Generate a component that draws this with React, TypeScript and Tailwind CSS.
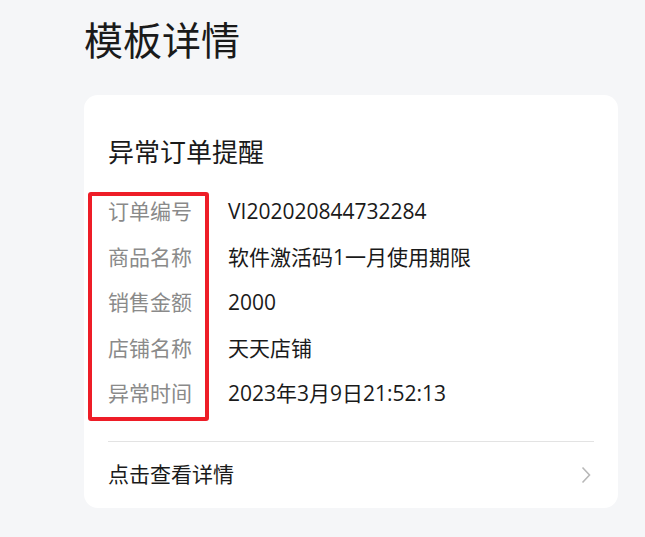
const rows = [
  { label: "订单编号", value: "VI202020844732284" },
  { label: "商品名称", value: "软件激活码1一月使用期限" },
  { label: "销售金额", value: "2000" },
  { label: "店铺名称", value: "天天店铺" },
  { label: "异常时间", value: "2023年3月9日21:52:13" },
];

export default function App() {
  return (
    <div
      className="min-h-[537px] bg-[#f5f6f8] pt-[20px] text-[#1a1a1a]"
      style={{ fontFamily: '"Open Sans", "Noto Sans CJK SC", sans-serif' }}
    >
      <h1 className="ml-[84px] text-[39px] leading-[40px]">模板详情</h1>

      {/* Card */}
      <div className="ml-[84px] mt-[35px] w-[534px] rounded-[14px] bg-white px-6 pt-[44px]">
        <h2 className="text-[26px] leading-[26px]">异常订单提醒</h2>

        <div className="relative mt-[24px]">
          {rows.map((r) => (
            <div key={r.label} className="flex h-[45.5px] items-center text-[21px]">
              <span className="w-[120px] text-[#8a8a8a]">{r.label}</span>
              <span>{r.value}</span>
            </div>
          ))}
          {/* red highlight annotation */}
          <div className="absolute left-[-20px] top-[3px] h-[229px] w-[121px] rounded-[3px] border-4 border-[#ee1d27]" />
        </div>

        <div className="mt-[24px] border-t border-[#e3e3e3]" />
        <div className="flex h-[66px] items-center justify-between">
          <span className="text-[21px]">点击查看详情</span>
          <svg width="10" height="18" viewBox="0 0 10 18" className="mr-[3px]">
            <polyline points="1.5,1.5 8.5,9 1.5,16.5" fill="none" stroke="#b8b8b8" strokeWidth="1.6" />
          </svg>
        </div>
      </div>
    </div>
  );
}
